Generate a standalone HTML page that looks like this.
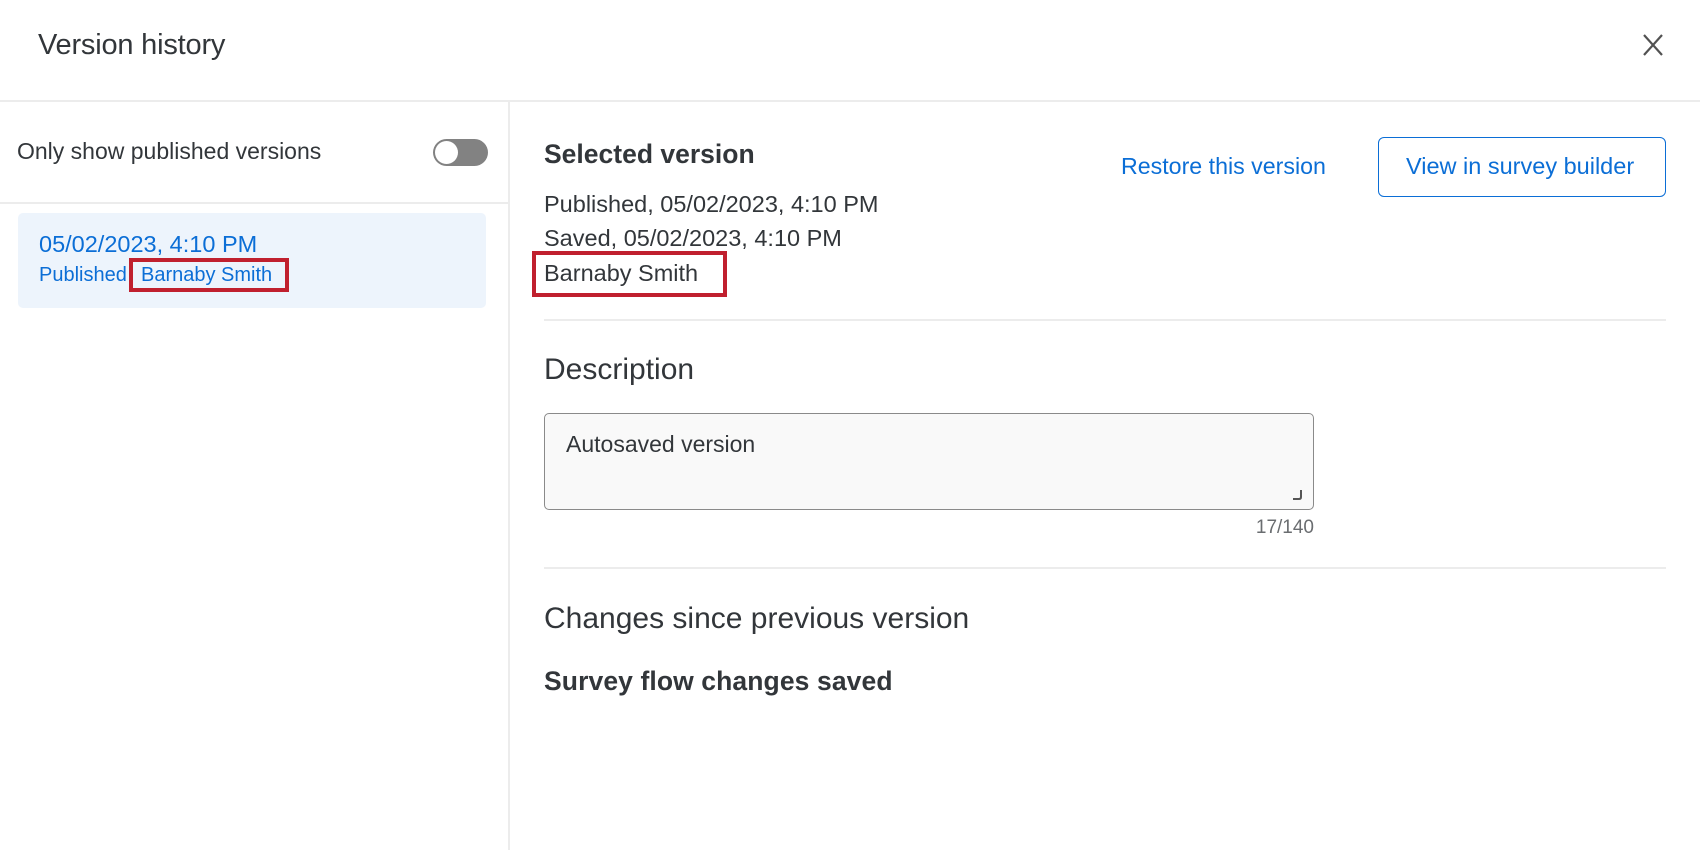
<!DOCTYPE html>
<html><head><meta charset="utf-8"><style>
*{margin:0;padding:0;box-sizing:border-box}
body{width:1700px;height:850px;background:#fff;position:relative;overflow:hidden;font-family:"Liberation Sans",sans-serif;color:#32363a}
.a{position:absolute;white-space:nowrap;line-height:1}
</style></head><body>
<div class="a" style="left:38px;top:31px;font-size:29px;letter-spacing:-0.2px;color:#32363a">Version history</div>
<svg class="a" style="left:1640px;top:33px" width="26" height="26" viewBox="0 0 26 26"><path d="M4 2 L22 22 M22 2 L4 22" stroke="#525252" stroke-width="2.2"/></svg>
<div class="a" style="left:0;top:100px;width:1700px;height:2px;background:#ececec"></div>
<div class="a" style="left:508px;top:101px;width:2px;height:749px;background:#ececec"></div>

<div class="a" style="left:17px;top:140px;font-size:23px;letter-spacing:0">Only show published versions</div>
<div class="a" style="left:433px;top:139px;width:55px;height:27px;border-radius:14px;background:#828282"></div>
<div class="a" style="left:435px;top:141px;width:23px;height:23px;border-radius:50%;background:#fff"></div>
<div class="a" style="left:0;top:202px;width:508px;height:2px;background:#ececec"></div>

<div class="a" style="left:18px;top:213px;width:468px;height:95px;border-radius:5px;background:#edf4fc"></div>
<div class="a" style="left:39px;top:233px;font-size:23.5px;color:#0b6ed6">05/02/2023, 4:10 PM</div>
<div class="a" style="left:39px;top:265px;font-size:20px;color:#0b6ed6">Published</div>
<div class="a" style="left:129px;top:258px;width:160px;height:34px;border:4px solid #c0202e"></div>
<div class="a" style="left:141px;top:265px;font-size:20px;color:#0b6ed6">Barnaby Smith</div>

<div class="a" style="left:544px;top:141px;font-size:26.5px;font-weight:bold">Selected version</div>
<div class="a" style="left:544px;top:193px;font-size:23.5px">Published, 05/02/2023, 4:10 PM</div>
<div class="a" style="left:544px;top:227px;font-size:23.5px">Saved, 05/02/2023, 4:10 PM</div>
<div class="a" style="left:532px;top:251px;width:195px;height:46px;border:4px solid #c0202e"></div>
<div class="a" style="left:544px;top:262px;font-size:23.5px">Barnaby Smith</div>

<div class="a" style="left:1121px;top:155px;font-size:23.2px;color:#0b6ed6">Restore this version</div>
<div class="a" style="left:1378px;top:137px;width:288px;height:60px;border:1.5px solid #0b6ed6;border-radius:6px"></div>
<div class="a" style="left:1406px;top:155px;font-size:23.5px;color:#0b6ed6">View in survey builder</div>

<div class="a" style="left:544px;top:319px;width:1122px;height:2px;background:#ececec"></div>
<div class="a" style="left:544px;top:355px;font-size:30px">Description</div>
<div class="a" style="left:544px;top:413px;width:770px;height:97px;border:1.5px solid #8a8a8a;border-radius:5px;background:#f9f9f9"></div>
<svg class="a" style="left:1291px;top:489px" width="12" height="12"><path d="M10 1 V8 Q10 10 8 10 H2" stroke="#555" stroke-width="2" fill="none"/></svg>
<div class="a" style="left:566px;top:433px;font-size:23px">Autosaved version</div>
<div class="a" style="left:1214px;top:518px;width:100px;text-align:right;font-size:19px;color:#6a6d70">17/140</div>
<div class="a" style="left:544px;top:567px;width:1122px;height:2px;background:#ececec"></div>
<div class="a" style="left:544px;top:604px;font-size:30px">Changes since previous version</div>
<div class="a" style="left:544px;top:668px;font-size:26.5px;font-weight:bold;letter-spacing:0.1px">Survey flow changes saved</div>
</body></html>
